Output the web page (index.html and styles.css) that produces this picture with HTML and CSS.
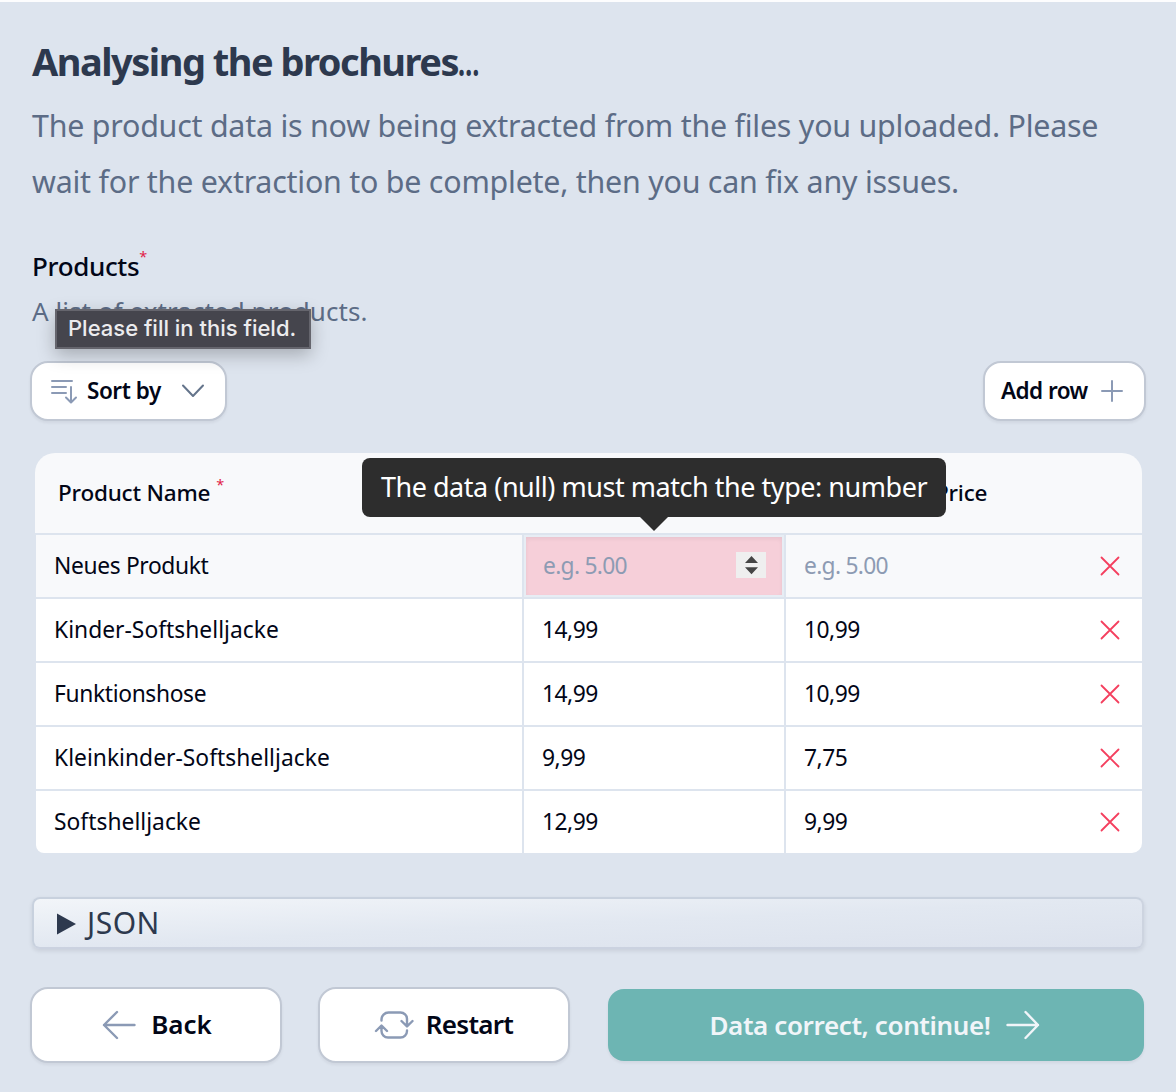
FILE: index.html
```html
<!DOCTYPE html>
<html lang="en">
<head>
<meta charset="utf-8">
<title>Analysing the brochures</title>
<link rel="stylesheet" href="styles.css">
</head>
<body>
<svg class="defs" width="0" height="0" aria-hidden="true">
  <symbol id="cross" viewBox="0 0 20 20"><path d="M1.5 1.5l17 17M18.5 1.5l-17 17"/></symbol>
</svg>
<main class="page">
  <h1 class="title"><span>Analysing the brochures</span><span class="dots">…</span></h1>
  <p class="intro">The product data is now being extracted from the files you uploaded. Please<br>wait for the extraction to be complete, then you can fix any issues.</p>

  <h2 class="label">Products<span class="required">*</span></h2>
  <div class="hint">A list of extracted products.
    <div class="native-tip">Please fill in this field.</div>
  </div>

  <div class="toolbar">
    <button class="btn btn-small sort">
      <svg class="icon" width="28" height="28" viewBox="0 0 28 28"><path d="M2 4h20M2 10h14M2 16h14M21 10v15M16 20.5l5 5 5-5"/></svg>
      <span class="sort-text">Sort by</span>
      <svg class="icon chevron" width="24" height="16" viewBox="0 0 24 16"><path d="M2 2.500L12 13 22 2.500"/></svg>
    </button>
    <button class="btn btn-small add">
      <span class="add-text">Add row</span>
      <svg class="icon" width="24" height="24" viewBox="0 0 24 24"><path d="M12 2v20M2 12h20"/></svg>
    </button>
  </div>

  <section class="grid">
    <div class="grid-head">
      <div class="head-name">Product Name<span class="required">*</span></div>
      <div></div>
      <div class="head-price">Price</div>
    </div>
    <div class="row row-new">
      <div class="cell snug">Neues Produkt</div>
      <div class="cell invalid">
        <span class="placeholder">e.g. 5.00</span>
        <svg class="spinner" width="30" height="26" viewBox="0 0 30 26"><path d="M15.500 4l6.500 7H9zM15.500 22.300l6.500-7H9z"/></svg>
        <div class="error-tip">The data (null) must match the type: number</div>
      </div>
      <div class="cell last"><span class="placeholder">e.g. 5.00</span><svg class="remove"><use href="#cross"/></svg></div>
    </div>
    <div class="row">
      <div class="cell wide">Kinder-Softshelljacke</div><div class="cell num">14,99</div>
      <div class="cell num last"><span>10,99</span><svg class="remove"><use href="#cross"/></svg></div>
    </div>
    <div class="row">
      <div class="cell snug">Funktionshose</div><div class="cell num">14,99</div>
      <div class="cell num last"><span>10,99</span><svg class="remove"><use href="#cross"/></svg></div>
    </div>
    <div class="row">
      <div class="cell wide">Kleinkinder-Softshelljacke</div><div class="cell num">9,99</div>
      <div class="cell num last"><span>7,75</span><svg class="remove"><use href="#cross"/></svg></div>
    </div>
    <div class="row">
      <div class="cell wide">Softshelljacke</div><div class="cell num">12,99</div>
      <div class="cell num last"><span>9,99</span><svg class="remove"><use href="#cross"/></svg></div>
    </div>
  </section>

  <div class="json"><svg width="19" height="22" viewBox="0 0 19 22"><path d="M0 .5L19 11 0 21.500z"/></svg><span>JSON</span></div>

  <footer class="actions">
    <button class="btn btn-large back">
      <svg class="icon thick" width="34" height="30" viewBox="0 0 34 30"><path d="M15 2L2 15l13 13M2 15h30.500"/></svg>
      <span>Back</span>
    </button>
    <button class="btn btn-large restart">
      <svg class="icon thick" width="40" height="30" viewBox="0 0 40 30"><path d="M7.500 10.500v-1a7 7 0 0 1 7-7h12a6.500 6.500 0 0 1 6.500 6.500v7M27.500 11l5.500 5.500 5.500-5.500M33 20.500v.5a6.500 6.500 0 0 1-6.500 6.500H14A6.500 6.500 0 0 1 7.500 21v-5M2 21l5.500-5.500L13 21"/></svg>
      <span>Restart</span>
    </button>
    <button class="primary">
      <span>Data correct, continue!</span>
      <svg class="icon thick light" width="34" height="30" viewBox="0 0 34 30"><path d="M19.500 2l12.500 13-12.500 13M32 15H1.500"/></svg>
    </button>
  </footer>
</main>
</body>
</html>
```
FILE: styles.css
```css
* { box-sizing: border-box; }
body {
  margin: 0;
  border-top: 2px solid #fdfdfe;
  min-height: 1092px;
  background: #dde4ee;
  color: #020617;
  font-family: "Noto Sans", "Open Sans", sans-serif;
  overflow: hidden;
}
html { background: #dde4ee; }
.defs { position: absolute; }
svg { flex: none; display: block; }
.page { padding: 35px 30px 0; }
.title {
  margin: 0 2px;
  font-size: 38px;
  line-height: 48px;
  font-weight: 700;
  letter-spacing: -1.5px;
  color: #2d394e;
}
.dots {
  display: inline-block;
  transform: scaleX(0.66);
  transform-origin: left;
}
.intro {
  margin: 13px 2px 0;
  font-size: 30.4px;
  line-height: 56px;
  letter-spacing: -0.23px;
  color: #5c6c86;
  white-space: nowrap;
}
.label {
  margin: 38px 2px 0;
  font-size: 26px;
  line-height: 36px;
  font-weight: 500;
  letter-spacing: -0.35px;
  display: flex;
}
.required {
  color: #e11d48;
  font-size: 14.5px;
  line-height: 16px;
  font-weight: 400;
}
.hint {
  position: relative;
  margin: 7px 2px 0;
  font-size: 26px;
  line-height: 40px;
  letter-spacing: 0.07px;
  color: #5c6c86;
}
.native-tip {
  position: absolute;
  left: 23px;
  top: 18px;
  width: 256px;
  height: 40px;
  padding-left: 11px;
  border: 2px solid #65656d;
  background: #45454d;
  box-shadow: 0 6px 18px rgba(0, 0, 0, 0.25);
  color: #ececee;
  font: 500 22px/35px Inter, sans-serif;
  letter-spacing: 0;
  white-space: nowrap;
}
.toolbar {
  display: flex;
  justify-content: space-between;
  margin-top: 30px;
}
.btn {
  display: flex;
  align-items: center;
  border: 2px solid #c1c8d4;
  background: #fff;
  color: #020617;
  font-family: inherit;
  font-weight: 600;
  box-shadow: 0 2px 3px rgba(15, 23, 42, 0.06);
}
.btn-small {
  height: 60px;
  border-radius: 18px;
  font-size: 22.5px;
  line-height: 56px;
}
.sort { width: 197px; padding: 0 20px 0 18px; }
.sort-text { margin: -1px 0 0 9px; letter-spacing: -0.45px; }
.chevron { margin-left: auto; }
.add { width: 163px; padding: 0 20px 0 16px; justify-content: space-between; }
.add-text { letter-spacing: -0.55px; }
.icon {
  fill: none;
  stroke: #8b9ab5;
  stroke-width: 2;
  stroke-linecap: round;
  stroke-linejoin: round;
}
.icon.chevron { stroke: #64748b; }
.thick { stroke-width: 2.4; }
.icon.light { stroke: #f1f5f9; }
.grid {
  margin: 32px 4px 0 5px;
}
.grid-head {
  display: grid;
  grid-template-columns: 489px 262px 1fr;
  height: 82px;
  border-bottom: 2px solid #dde4ee;
  border-radius: 20px 20px 0 0;
  background: #f8f9fb;
  font-size: 22.5px;
  line-height: 80px;
  font-weight: 500;
  letter-spacing: -0.2px;
}
.head-name { display: flex; padding-left: 23px; }
.head-name .required { margin: 23px 0 0 6px; }
.head-price { padding-left: 149px; }
.row {
  display: grid;
  grid-template-columns: 486px 260px 1fr;
  column-gap: 2px;
  height: 62px;
  margin: 0 0 2px 1px;
  font-size: 22.8px;
  line-height: 62px;
}
.row:last-child { margin-bottom: 0; }
.cell {
  display: flex;
  align-items: center;
  justify-content: space-between;
  padding-left: 18px;
  background: #fff;
}
.num { letter-spacing: -0.5px; }
.snug { letter-spacing: -0.35px; }
.wide { letter-spacing: 0.02px; }
.row-new .cell { background: #f8f9fb; }
.row:last-child .cell:first-child { border-bottom-left-radius: 8px; }
.row:last-child .last { border-bottom-right-radius: 10px; }
.last { padding: 0 22px 0 18px; }
.remove { width: 20px; height: 20px; stroke: #f43f5e; stroke-width: 1.8; stroke-linecap: round; }
.placeholder { color: #8d9bb3; letter-spacing: -0.7px; }
.row-new .invalid {
  position: relative;
  padding: 0 16px 0 17px;
  border: 2px solid #e7edf4;
  background: #f6cfd9;
  box-shadow: inset 0 2px 4px rgba(15, 23, 42, 0.06);
  line-height: 58px;
}
.spinner { background: #efefef; fill: #454545; margin-top: -2px; }
.error-tip {
  position: absolute;
  left: -164px;
  top: -79px;
  width: 584px;
  height: 59px;
  border-radius: 8px;
  background: #2d2d2d;
  color: #fff;
  font-size: 27px;
  line-height: 57px;
  letter-spacing: -0.47px;
  text-align: center;
  white-space: nowrap;
}
.error-tip::after {
  content: "";
  position: absolute;
  left: 278px;
  top: 59px;
  border: 14px solid transparent;
  border-top-color: #2d2d2d;
  border-bottom: 0;
}
.json {
  display: flex;
  align-items: center;
  gap: 11px;
  height: 52px;
  margin: 44px 2px 0;
  padding-left: 23px;
  border: 2px solid #c8d1de;
  border-right-color: #cdd4e0;
  border-bottom-color: #cbd2e0;
  border-radius: 8px;
  background: linear-gradient(to bottom right, #f2f5f9, #e2e8f1 50%, #dce2ed);
  box-shadow: 0 2px 4px rgba(15, 23, 42, 0.1);
  color: #2d394e;
  font-size: 30px;
  line-height: 46px;
  letter-spacing: 0.5px;
}
.json svg { fill: #2d394e; margin-top: 1px; }
.actions {
  display: grid;
  grid-template-columns: 252px 252px 538px;
  column-gap: 36px;
  align-items: center;
  margin-top: 38px;
}
.actions button { justify-content: center; font-size: 26px; line-height: 72px; }
.btn-large { height: 76px; padding: 0; border-radius: 18px; gap: 15px; }
.back { padding-left: 2px; }
.restart { letter-spacing: -0.7px; gap: 12px; padding-right: 1px; }
.restart span, .back span { margin-top: -2px; }
.primary {
  display: flex;
  align-items: center;
  gap: 15px;
  height: 72px;
  margin-left: 2px;
  padding: 0 3px 0 0;
  border: 0;
  border-radius: 16px;
  background: #6db5b3;
  color: #f1f5f9;
  font-family: inherit;
  font-weight: 600;
  letter-spacing: -0.38px;
  box-shadow: 0 2px 3px rgba(15, 23, 42, 0.06);
}
```
